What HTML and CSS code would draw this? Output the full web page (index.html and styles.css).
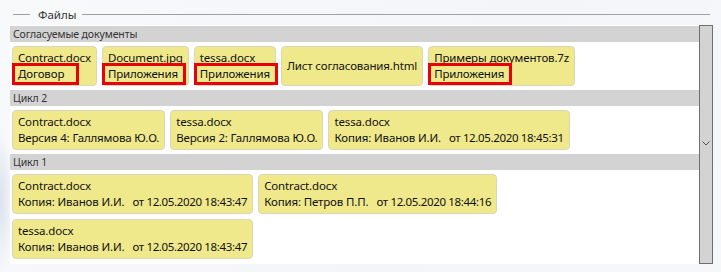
FILE: index.html
```html
<!DOCTYPE html>
<html lang="ru">

<head>
  <meta charset="UTF-8">
  <title>Файлы</title>
  <link rel="stylesheet" href="styles.css">
</head>

<body>

  <div class="group">
    <div class="group-title"><span>Файлы</span></div>

    <div class="frame">
      <div class="list">

        <div class="section-title">Согласуемые документы</div>
        <div class="section-body">
          <div class="card">
            <div>Contract.docx</div>
            <div><span class="mark mark-wide">Договор</span></div>
          </div>
          <div class="card">
            <div>Document.jpg</div>
            <div><span class="mark">Приложения</span></div>
          </div>
          <div class="card">
            <div>tessa.docx</div>
            <div><span class="mark">Приложения</span></div>
          </div>
          <div class="card">
            <div>Лист согласования.html</div>
          </div>
          <div class="card">
            <div>Примеры документов.7z</div>
            <div><span class="mark">Приложения</span></div>
          </div>
        </div>

        <div class="section-title">Цикл 2</div>
        <div class="section-body">
          <div class="card">
            <div>Contract.docx</div>
            <div>Версия 4: Галлямова Ю.О.</div>
          </div>
          <div class="card">
            <div>tessa.docx</div>
            <div>Версия 2: Галлямова Ю.О.</div>
          </div>
          <div class="card">
            <div>tessa.docx</div>
            <div>Копия: Иванов И.И.<span class="date">от 12.05.2020 18:45:31</span></div>
          </div>
        </div>

        <div class="section-title">Цикл 1</div>
        <div class="section-body">
          <div class="card">
            <div>Contract.docx</div>
            <div>Копия: Иванов И.И.<span class="date">от 12.05.2020 18:43:47</span></div>
          </div>
          <div class="card">
            <div>Contract.docx</div>
            <div>Копия: Петров П.П.<span class="date">от 12.05.2020 18:44:16</span></div>
          </div>
          <div class="card">
            <div>tessa.docx</div>
            <div>Копия: Иванов И.И.<span class="date">от 12.05.2020 18:43:47</span></div>
          </div>
        </div>

      </div>

      <div class="scrollbar">
        <svg width="8" height="5" viewBox="0 0 8 5">
          <path d="M0.5 0.5 L4 4 L7.5 0.5" fill="none" stroke="#555" stroke-width="1" />
        </svg>
      </div>
    </div>
  </div>

</body>

</html>
```

FILE: styles.css
```css
body {
  margin: 0;
  padding: 6px 8px 0 10px;
  height: 272px;
  box-sizing: border-box;
  overflow: hidden;
  font-family: "Noto Sans", "Open Sans", sans-serif;
  color: #111;
  background-color: #f5f7f9;
  background-image:
    radial-gradient(ellipse 14px 70px at 0 200px, #d9e2ee, rgba(217, 226, 238, 0)),
    linear-gradient(120deg, #f8f9fb 0%, #f3f5f8 60%, #f6f7f9 100%);
}

.group-title {
  display: flex;
  align-items: center;
  height: 16px;
  margin-bottom: 3px;
  font-size: 11.5px;
  color: #333;
}

.group-title::before {
  content: '';
  width: 17px;
  margin-left: 3px;
  margin-right: 8px;
  border-top: 1px solid #a0a0a0;
}

.group-title::after {
  content: '';
  flex: 1;
  margin-left: 6px;
  margin-right: 3px;
  border-top: 1px solid #a0a0a0;
}

.frame {
  display: flex;
  height: 239px;
}

.list {
  flex: 1;
  background: #fff;
  padding-top: 1px;
  overflow: hidden;
}

.scrollbar {
  width: 12px;
  border: 1px solid #6e6e6e;
  background: #d3d3d3;
  display: flex;
  align-items: center;
  justify-content: center;
  padding-bottom: 2px;
}

.section-title {
  height: 16px;
  line-height: 16px;
  padding-left: 3px;
  background: #d3d3d3;
  font-size: 10.5px;
  letter-spacing: -0.1px;
  color: #333;
}

.section-body {
  display: flex;
  flex-wrap: wrap;
  gap: 5px;
  padding: 4px 2px;
}

.card {
  height: 40px;
  box-sizing: border-box;
  padding: 3px 5px;
  border: 1px solid #d9d6bd;
  border-radius: 4px;
  background: #f0e98c;
  font-size: 11.5px;
  letter-spacing: -0.15px;
  line-height: 16px;
  display: flex;
  flex-direction: column;
  justify-content: center;
}

.mark {
  display: inline-block;
  border: 3px solid #e8000b;
  margin: -3px -8px -3px -6px;
  padding: 0 5px 0 3px;
}

.mark-wide {
  padding-right: 12px;
}

.date {
  margin-left: 8px;
  letter-spacing: -0.35px;
}
```
